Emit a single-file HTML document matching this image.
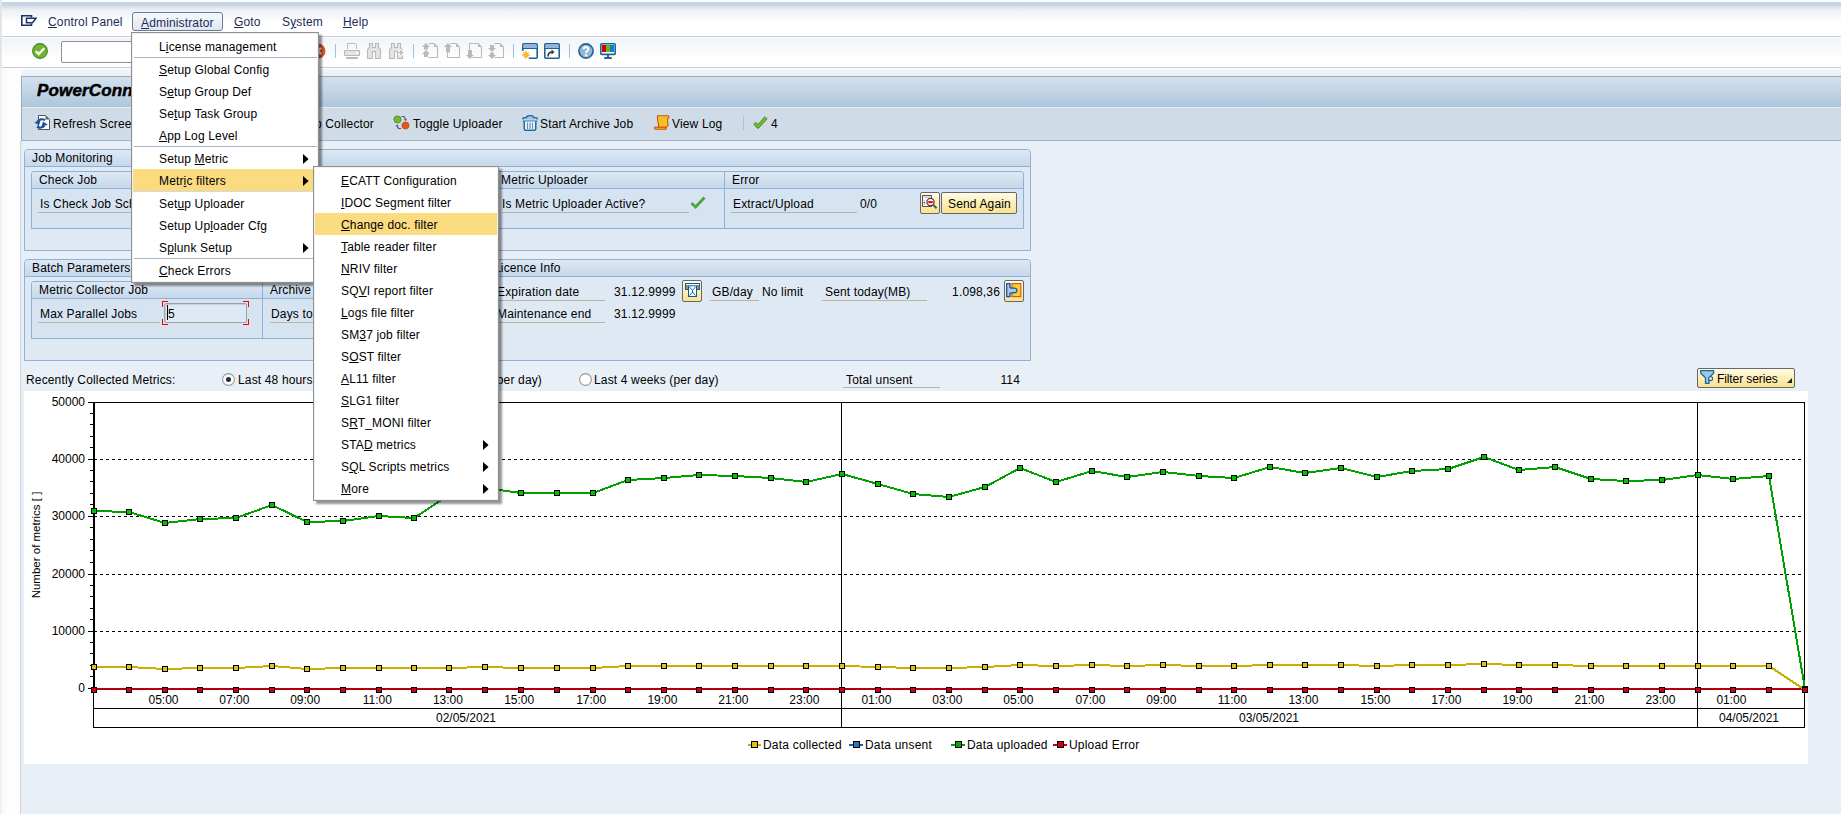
<!DOCTYPE html><html><head><meta charset="utf-8"><title>PowerConnect</title><style>
*{margin:0;padding:0;box-sizing:border-box}
html,body{width:1841px;height:814px;overflow:hidden;background:#fff;font-family:"Liberation Sans",sans-serif;font-size:12px;color:#000}
.a{position:absolute}
.t{position:absolute;white-space:nowrap;line-height:14px;font-size:12px;letter-spacing:0.15px}
.c{letter-spacing:0}
u{text-decoration:none;border-bottom:1px solid currentColor}
svg{display:block}
</style></head><body><div class="a" style="left:0;top:0;width:1841px;height:36px;background:linear-gradient(#fbfcfd 0px,#fbfcfd 1.5px,#c8d3e5 2px,#cbd4e4 5px,#e3e8f0 8px,#eef1f6 11px,#f8f9fb 18px,#fff 22px)"></div>
<div class="a" style="left:0;top:36px;width:1841px;height:1px;background:#c3cbd7"></div>
<div class="a" style="left:0;top:37px;width:1841px;height:30px;background:linear-gradient(#fff 0px,#fff 1px,#f1f4f8 1px,#fbfcfd 18px,#fff 21px)"></div>
<div class="a" style="left:0;top:67px;width:1841px;height:1px;background:#c3cbd7"></div>
<div class="a" style="left:0;top:68px;width:1841px;height:8px;background:linear-gradient(#fff 0px,#fff 1px,#f3f5f9 1px,#e9eef6)"></div>
<div class="a" style="left:0;top:0;width:2px;height:814px;background:linear-gradient(90deg,#dcdde0,#eeeff1);z-index:0"></div>
<div class="a" style="left:0;top:68px;width:21px;height:746px;background:linear-gradient(90deg,#e9eaec,#f8f8f9 2px,#fdfdfd 6px)"></div>
<div class="a" style="left:20px;top:141px;width:1px;height:673px;background:#c8d2df"></div>
<div class="a" style="left:21px;top:76px;width:1820px;height:1px;background:#9aaabd"></div>
<div class="a" style="left:21px;top:76px;width:1px;height:65px;background:#9aaabd"></div>
<div class="a" style="left:22px;top:77px;width:1819px;height:30px;background:linear-gradient(#d3e1ee,#bccfe2 65%,#adc5dd)"></div>
<div class="a" style="left:22px;top:107px;width:1819px;height:1px;background:#e4ebf3"></div>
<div class="a" style="left:22px;top:108px;width:1819px;height:32px;background:#cfdce8"></div>
<div class="a" style="left:21px;top:140px;width:1820px;height:1px;background:#a6b5c6"></div>
<div class="a" style="left:21px;top:141px;width:1820px;height:673px;background:#e9eff6"></div>
<div class="a" style="left:21px;top:15px"><svg width="16" height="12"><path d="M10.5 2.5V0.8H0.8V10.2H10.5V8.5" fill="none" stroke="#1f3264" stroke-width="1.6"/><path d="M5.5 3.3H15L11.5 7.7H5.5Z" fill="none" stroke="#1f3264" stroke-width="1.5"/></svg></div>
<div class="t" style="left:48px;top:15px;color:#1c2b55"><span style="text-decoration:underline">C</span>ontrol Panel</div>
<div class="a" style="left:132px;top:12px;width:91px;height:19px;border:1px solid #6a7b94;border-radius:3px;background:linear-gradient(#f7f9fc,#dfe7f1)"></div>
<div class="t" style="left:141px;top:16px;color:#1c2b55"><span style="text-decoration:underline">A</span>dministrator</div>
<div class="t" style="left:234px;top:15px;color:#1c2b55"><span style="text-decoration:underline">G</span>oto</div>
<div class="t" style="left:282px;top:15px;color:#1c2b55">S<span style="text-decoration:underline">y</span>stem</div>
<div class="t" style="left:343px;top:15px;color:#1c2b55"><span style="text-decoration:underline">H</span>elp</div>
<div class="a" style="left:32px;top:43px"><svg width="16" height="16"><circle cx="8" cy="8" r="7.4" fill="#74b42a" stroke="#3d8a38" stroke-width="1.1"/><path d="M3.8 8.2l2.9 2.9 5.5-5.8" fill="none" stroke="#fff" stroke-width="2.3"/></svg></div>
<div class="a" style="left:61px;top:41px;width:80px;height:22px;border:1px solid #8e8e8e;border-radius:2px;background:#fff"></div>
<div class="a" style="left:335px;top:44px;width:1px;height:14px;background:#9fc0e2"></div>
<div class="a" style="left:413px;top:44px;width:1px;height:14px;background:#9fc0e2"></div>
<div class="a" style="left:513px;top:44px;width:1px;height:14px;background:#9fc0e2"></div>
<div class="a" style="left:569px;top:44px;width:1px;height:14px;background:#9fc0e2"></div>
<div class="a" style="left:310px;top:43px"><svg width="16" height="16"><circle cx="8" cy="8" r="7.5" fill="#d4542a"/><path d="M5 5l6 6M11 5l-6 6" stroke="#fff" stroke-width="2"/></svg></div>
<div class="a" style="left:344px;top:43px"><svg width="17" height="16"><path d="M3.5 6V0.5H11.5L12.5 1.5V6" fill="none" stroke="#b9b9b9" stroke-width="1"/><rect x="0.5" y="7.5" width="15" height="5" rx="1" fill="#e4e4e4" stroke="#b9b9b9" stroke-width="1.2"/><rect x="12" y="9" width="2" height="2" fill="#fff"/><rect x="2" y="14" width="12" height="2" rx="0.7" fill="#b9b9b9"/></svg></div>
<div class="a" style="left:367px;top:43px"><svg width="17" height="16"><path d="M2.5 0.5H5.5V4.5H8.5V0.5H11.5V4.5L13.5 6.5V15.5H8.5V8.5H5.5V15.5H0.5V6.5L2.5 4.5Z" fill="#e4e4e4" stroke="#b9b9b9" stroke-width="1.1"/></svg></div>
<div class="a" style="left:389px;top:43px"><svg width="17" height="16"><path d="M2.5 0.5H5.5V4.5H8.5V0.5H11.5V4.5L13.5 6.5V15.5H8.5V8.5H5.5V15.5H0.5V6.5L2.5 4.5Z" fill="#e4e4e4" stroke="#b9b9b9" stroke-width="1.1"/><path d="M12 6.5v6M9 9.5h6" stroke="#fff" stroke-width="3.6"/><path d="M12 7v5M9.5 9.5h5" stroke="#b9b9b9" stroke-width="1.6"/></svg></div>
<div class="a" style="left:422px;top:43px"><svg width="17" height="16"><path d="M6.5 0.5H12L15.5 4V14.5H6.5" fill="none" stroke="#b9b9b9" stroke-width="1.1"/><path d="M12 0.5L15.5 4H12Z M4 0L8 4H6V6.5H2V4H0Z M4 7L8 11H6V14H2V11H0Z" fill="#b9b9b9"/></svg></div>
<div class="a" style="left:444px;top:43px"><svg width="17" height="16"><path d="M3.5 9.5V14.5H15.5V4L12 0.5H6.5" fill="none" stroke="#b9b9b9" stroke-width="1.1"/><path d="M12 0.5L15.5 4H12Z M4 0L8 4H6V9.5H2V4H0Z" fill="#b9b9b9"/></svg></div>
<div class="a" style="left:466px;top:43px"><svg width="17" height="16"><path d="M3.5 7V0.5H12L15.5 4V14.5H6.5" fill="none" stroke="#b9b9b9" stroke-width="1.1"/><path d="M12 0.5L15.5 4H12Z M4 16L8 12H6V7H2V12H0Z" fill="#b9b9b9"/></svg></div>
<div class="a" style="left:488px;top:43px"><svg width="17" height="16"><path d="M6.5 0.5H12L15.5 4V14.5H6.5" fill="none" stroke="#b9b9b9" stroke-width="1.1"/><path d="M12 0.5L15.5 4H12Z M4 9L8 5H6V2H2V5H0Z M4 16L8 12H6V9.5H2V12H0Z" fill="#b9b9b9"/></svg></div>
<div class="a" style="left:522px;top:43px"><svg width="17" height="16"><rect x="0.8" y="0.8" width="14.4" height="14.4" rx="1" fill="#fff" stroke="#1f6296" stroke-width="1.6"/><rect x="1.6" y="1.6" width="12.8" height="3.4" fill="#94b6d8"/><path d="M1 5.5h14" stroke="#1f6296" stroke-width="1"/><rect x="0" y="8" width="7" height="8" fill="#fff"/><circle cx="4" cy="12" r="2.4" fill="#f7b500"/><path d="M4 8v8M0 12h8M1.2 9.2l5.6 5.6M6.8 9.2l-5.6 5.6" stroke="#f39a1a" stroke-width="1"/><circle cx="4" cy="12" r="2" fill="#fbc21a"/></svg></div>
<div class="a" style="left:544px;top:43px"><svg width="17" height="16"><rect x="0.8" y="0.8" width="14.4" height="14.4" rx="1" fill="#fff" stroke="#1f6296" stroke-width="1.6"/><rect x="1.6" y="1.6" width="12.8" height="3.4" fill="#94b6d8"/><path d="M1 5.5h14" stroke="#1f6296" stroke-width="1"/><path d="M4 13.5C4 10.5 5.5 9 8.5 9" fill="none" stroke="#333" stroke-width="1.6"/><path d="M7.5 6.5L10.5 9L7.5 11.5Z" fill="#333"/></svg></div>
<div class="a" style="left:578px;top:43px"><svg width="16" height="16"><circle cx="8" cy="8" r="7.1" fill="#94b6d8" stroke="#1f6296" stroke-width="1.6"/><path d="M5.7 6.2a2.3 2.2 0 1 1 3.4 1.9c-0.9 0.5-1.1 1-1.1 2" fill="none" stroke="#fff" stroke-width="1.9"/><rect x="6.9" y="11.2" width="2.2" height="2.2" fill="#fff"/></svg></div>
<div class="a" style="left:600px;top:43px"><svg width="16" height="16"><rect x="0.8" y="0.8" width="14.4" height="10.6" rx="1" fill="#fff" stroke="#1f6296" stroke-width="1.6"/><rect x="2" y="2" width="4" height="7" fill="#d00000"/><rect x="6" y="2" width="4" height="7" fill="#70b020"/><rect x="10" y="2" width="4" height="7" fill="#1080d0"/><rect x="7" y="11.5" width="2" height="3" fill="#1f6296"/><rect x="4" y="14" width="8" height="2" rx="1" fill="#1f6296"/></svg></div>
<div class="t" style="left:37px;top:81px;font-size:17px;line-height:20px;font-weight:bold;font-style:italic;-webkit-text-stroke:0.5px #000">PowerConnect for SAP Solutions</div>
<div class="a" style="left:34px;top:115px"><svg width="16" height="16"><path d="M4.5 0.5H11.5L15.5 4.5V14.5H4.5Z" fill="#fff" stroke="#555" stroke-width="1"/><path d="M11.5 0.5L15.5 4.5H11.5Z" fill="#666"/><path d="M11 5.2A4.6 3.6 0 0 0 3.6 6.6" fill="none" stroke="#1f4fa0" stroke-width="2.2"/><path d="M0.3 7.2L6.6 5.2L5 10.6Z" fill="#1f4fa0"/><path d="M3 11.6A4.6 3.6 0 0 0 10.4 10.4" fill="none" stroke="#1f4fa0" stroke-width="2.2"/><path d="M13.8 9.8L7.4 11.8L9 6.4Z" fill="#1f4fa0"/></svg></div>
<div class="t" style="left:53px;top:117px;">Refresh Screen</div>
<div class="t" style="left:74px;width:300px;text-align:right;top:117px;">Start/Stop Collector</div>
<div class="a" style="left:393px;top:115px"><svg width="17" height="16"><circle cx="4.5" cy="4.5" r="3.6" fill="#76b82a" stroke="#3f8a3f" stroke-width="0.8"/><circle cx="12.5" cy="10.5" r="3.6" fill="#e05a1a" stroke="#c04010" stroke-width="0.6"/><path d="M8.5 1.5h2.5l1.5 2.5" fill="none" stroke="#555" stroke-width="1.2"/><path d="M10.8 4.2h3.4l-1.7 1.8z" fill="#555"/><path d="M8 13.5H5.5L4 11.2" fill="none" stroke="#555" stroke-width="1.2"/><path d="M2.3 11.2h3.4l-1.7-1.8z" fill="#555"/></svg></div>
<div class="t" style="left:413px;top:117px;">Toggle Uploader</div>
<div class="a" style="left:522px;top:115px"><svg width="16" height="16"><path d="M0.8 4.5V3.6C0.8 3 1.3 2.6 2 2.6H4.5C4.5 1 5.5 0.6 8 0.6S11.5 1 11.5 2.6H14C14.7 2.6 15.2 3 15.2 3.6V4.5" fill="#a8c6e6" stroke="#1e6aa0" stroke-width="1.3"/><path d="M0.8 6.2h14.4" stroke="#1e6aa0" stroke-width="1.3"/><path d="M2.3 6.5V13.8C2.3 14.6 3 15.2 3.8 15.2H12.2C13 15.2 13.7 14.6 13.7 13.8V6.5" fill="#fff" stroke="#1e6aa0" stroke-width="1.6"/><path d="M5.5 7.5V14M8 7.5V14M10.5 7.5V14" stroke="#5a92c4" stroke-width="1.3"/></svg></div>
<div class="t" style="left:540px;top:117px;">Start Archive Job</div>
<div class="a" style="left:654px;top:115px"><svg width="16" height="15"><path d="M3.5 0.8H14.5C15.3 1.5 15.2 2.6 14 3.2C12.8 4.8 13.5 6.8 14 8.5C14.5 10.5 13.5 11.8 12 12.2H4C5 10.5 4.8 8.8 4 7C3.3 5.2 3.5 3.5 3.5 0.8Z" fill="#f8c020" stroke="#d05010" stroke-width="1.1"/><path d="M0.6 12.2H12C12.5 13 12.3 13.8 11.6 14.3H1.5C0.9 13.8 0.5 13 0.6 12.2Z" fill="#f8b020" stroke="#d05010" stroke-width="1.1"/></svg></div>
<div class="t" style="left:672px;top:117px;">View Log</div>
<div class="a" style="left:743px;top:116px;width:1px;height:14px;background:#a8c4e2"></div>
<div class="a" style="left:753px;top:116px"><svg width="15" height="13"><path d="M1.5 7L5 10.8L13.2 1.5" fill="none" stroke="#4a8a2a" stroke-width="3.6" stroke-linejoin="round"/><path d="M1.5 7L5 10.8L13.2 1.5" fill="none" stroke="#78b830" stroke-width="2.2" stroke-linejoin="round"/></svg></div>
<div class="t" style="left:771px;top:117px;">4</div>
<div class="a" style="left:24px;top:149px;width:1007px;height:102px;border:1px solid #90b0d4;border-radius:4px 4px 0 0;background:#dfe9f4"></div>
<div class="a" style="left:25px;top:150px;width:1005px;height:16px;border-radius:3px 3px 0 0;background:linear-gradient(#dde8f4,#c6d8ec)"></div>
<div class="a" style="left:25px;top:166px;width:1005px;height:1px;background:#90b0d4"></div>
<div class="a" style="left:31px;top:171px;width:993px;height:58px;border:1px solid #90b0d4;border-radius:3px 3px 0 0;background:#d6e4f2"></div>
<div class="a" style="left:32px;top:172px;width:991px;height:16px;border-radius:2px 2px 0 0;background:linear-gradient(#dde8f4,#c6d8ec)"></div>
<div class="a" style="left:32px;top:188px;width:991px;height:1px;background:#90b0d4"></div>
<div class="a" style="left:495px;top:172px;width:1px;height:56px;background:#90b0d4"></div>
<div class="a" style="left:724px;top:172px;width:1px;height:56px;background:#90b0d4"></div>
<div class="t" style="left:32px;top:151px;">Job Monitoring</div>
<div class="t" style="left:39px;top:173px;">Check Job</div>
<div class="t" style="left:40px;top:197px;">Is Check Job Scheduled?</div>
<div class="a" style="left:38px;top:212px;width:262px;height:1px;background:#b9b3a6"></div>
<div class="t" style="left:501px;top:173px;">Metric Uploader</div>
<div class="t" style="left:502px;top:197px;">Is Metric Uploader Active?</div>
<div class="a" style="left:502px;top:212px;width:187px;height:1px;background:#b9b3a6"></div>
<div class="a" style="left:690px;top:196px"><svg width="16" height="13"><path d="M1.5 7l4 4L14.5 1.5" fill="none" stroke="#4aa640" stroke-width="2.8"/></svg></div>
<div class="t" style="left:732px;top:173px;">Error</div>
<div class="t" style="left:733px;top:197px;">Extract/Upload</div>
<div class="a" style="left:731px;top:212px;width:126px;height:1px;background:#b9b3a6"></div>
<div class="t" style="left:860px;top:197px;">0/0</div>
<div class="a" style="left:920px;top:192px;width:20px;height:22px;border:1px solid #66666c;border-radius:2px;background:linear-gradient(#fffbe4,#fdf1c0 40%,#f9e38e)"></div>
<div class="a" style="left:922px;top:195px"><svg width="16" height="16"><rect x="0.5" y="0.5" width="9" height="11" fill="#fff" stroke="#555" stroke-width="1"/><rect x="1.5" y="1.5" width="7" height="1.2" fill="#bbb"/><path d="M1.5 5.3h2M1.5 9.3h2" stroke="#aaa" stroke-width="0.8"/><rect x="1.5" y="7" width="1.6" height="1.2" fill="#e00"/><circle cx="8.5" cy="7" r="3.6" fill="#fff" stroke="#444" stroke-width="1.3"/><rect x="6.3" y="6" width="4.4" height="2.2" fill="#f00"/><path d="M11 9.6l3.6 3.6" stroke="#555" stroke-width="2"/></svg></div>
<div class="a" style="left:941px;top:192px;width:76px;height:22px;border:1px solid #66666c;border-radius:2px;background:linear-gradient(#fffbe4,#fdf1c0 40%,#f9e38e)"></div>
<div class="t" style="left:948px;top:197px;">Send Again</div>
<div class="a" style="left:24px;top:259px;width:467px;height:102px;border:1px solid #90b0d4;border-radius:4px 4px 0 0;background:#dfe9f4"></div>
<div class="a" style="left:25px;top:260px;width:465px;height:16px;border-radius:3px 3px 0 0;background:linear-gradient(#dde8f4,#c6d8ec)"></div>
<div class="a" style="left:25px;top:276px;width:465px;height:1px;background:#90b0d4"></div>
<div class="a" style="left:31px;top:281px;width:454px;height:58px;border:1px solid #90b0d4;border-radius:3px 3px 0 0;background:#d6e4f2"></div>
<div class="a" style="left:32px;top:282px;width:452px;height:16px;border-radius:2px 2px 0 0;background:linear-gradient(#dde8f4,#c6d8ec)"></div>
<div class="a" style="left:32px;top:298px;width:452px;height:1px;background:#90b0d4"></div>
<div class="a" style="left:262px;top:282px;width:1px;height:56px;background:#90b0d4"></div>
<div class="t" style="left:32px;top:261px;">Batch Parameters</div>
<div class="t" style="left:39px;top:283px;">Metric Collector Job</div>
<div class="t" style="left:270px;top:283px;">Archive Job</div>
<div class="t" style="left:40px;top:307px;">Max Parallel Jobs</div>
<div class="a" style="left:38px;top:322px;width:122px;height:1px;background:#b9b3a6"></div>
<div class="t" style="left:271px;top:307px;">Days to keep</div>
<div class="a" style="left:270px;top:322px;width:200px;height:1px;background:#b9b3a6"></div>
<div class="a" style="left:164px;top:303px;width:83px;height:20px;border:1px solid #a0a0a0;border-radius:2px;background:#dfe9f3;box-shadow:inset 1px 1px 1px rgba(0,0,0,0.12)"></div>
<div class="a" style="left:167px;top:305px;width:1px;height:15px;background:#000"></div>
<div class="t" style="left:168px;top:307px;">5</div>
<div class="a" style="left:162px;top:301px;width:6px;height:6px;border-left:1px solid #f00000;border-top:1px solid #f00000"></div>
<div class="a" style="left:243px;top:301px;width:6px;height:6px;border-right:1px solid #f00000;border-top:1px solid #f00000"></div>
<div class="a" style="left:162px;top:319px;width:6px;height:6px;border-left:1px solid #f00000;border-bottom:1px solid #f00000"></div>
<div class="a" style="left:243px;top:319px;width:6px;height:6px;border-right:1px solid #f00000;border-bottom:1px solid #f00000"></div>
<div class="a" style="left:490px;top:259px;width:541px;height:102px;border:1px solid #90b0d4;border-radius:4px 4px 0 0;background:#dfe9f4"></div>
<div class="a" style="left:491px;top:260px;width:539px;height:16px;border-radius:3px 3px 0 0;background:linear-gradient(#dde8f4,#c6d8ec)"></div>
<div class="a" style="left:491px;top:276px;width:539px;height:1px;background:#90b0d4"></div>
<div class="t" style="left:494px;top:261px;">Licence Info</div>
<div class="t" style="left:497px;top:285px;">Expiration date</div>
<div class="a" style="left:499px;top:300px;width:106px;height:1px;background:#b9b3a6"></div>
<div class="t" style="left:614px;top:285px;">31.12.9999</div>
<div class="a" style="left:682px;top:280px;width:20px;height:22px;border:1px solid #66666c;border-radius:2px;background:linear-gradient(#fffbe4,#fdf1c0 40%,#f9e38e)"></div>
<div class="a" style="left:685px;top:283px"><svg width="15" height="15"><rect x="0" y="0" width="15" height="7" fill="#0a5a9a"/><rect x="1" y="1" width="13" height="1.3" fill="#fff"/><rect x="1" y="3" width="2" height="3" fill="#a58c7a"/><rect x="12" y="3" width="2" height="3" fill="#a58c7a"/><rect x="3" y="3" width="9" height="11" fill="#0a5a9a"/><rect x="4" y="3.3" width="7" height="9.7" fill="#fff"/><path d="M4.6 4L7.5 7.5V9L4.6 12.6M10.4 4L7.5 7.5M7.5 9L10.4 12.6" fill="none" stroke="#0a5a9a" stroke-width="0.9"/></svg></div>
<div class="t" style="left:712px;top:285px;">GB/day</div>
<div class="a" style="left:710px;top:300px;width:49px;height:1px;background:#b9b3a6"></div>
<div class="t" style="left:762px;top:285px;">No limit</div>
<div class="t" style="left:825px;top:285px;">Sent today(MB)</div>
<div class="a" style="left:822px;top:300px;width:105px;height:1px;background:#b9b3a6"></div>
<div class="t" style="left:700px;width:300px;text-align:right;top:285px;">1.098,36</div>
<div class="a" style="left:1004px;top:280px;width:20px;height:22px;border:1px solid #66666c;border-radius:2px;background:linear-gradient(#fffbe4,#fdf1c0 40%,#f9e38e)"></div>
<div class="a" style="left:1006px;top:283px"><svg width="16" height="15"><rect x="6" y="0.6" width="8.8" height="13" fill="#fbd030" stroke="#e0580e" stroke-width="1.2"/><path d="M0.7 0.7H4V4.6C5 5 6.2 5.2 8 5.2A2.3 2.3 0 1 1 8 9.6C6.2 9.6 5 9.8 4 10.2V13.6H0.7Z" fill="#a9c9ea" stroke="#0a5aa0" stroke-width="1.3"/></svg></div>
<div class="t" style="left:497px;top:307px;">Maintenance end</div>
<div class="a" style="left:499px;top:322px;width:106px;height:1px;background:#b9b3a6"></div>
<div class="t" style="left:614px;top:307px;">31.12.9999</div>
<div class="t" style="left:26px;top:373px;">Recently Collected Metrics:</div>
<div class="a" style="left:222px;top:373px"><svg width="13" height="13"><circle cx="6.5" cy="6.5" r="5.9" fill="#fff" stroke="#999" stroke-width="1.1"/><circle cx="6.5" cy="6.5" r="2.5" fill="#2a2a40"/></svg></div>
<div class="t" style="left:238px;top:373px;">Last 48 hours (per hour)</div>
<div class="a" style="left:426px;top:373px"><svg width="13" height="13"><circle cx="6.5" cy="6.5" r="5.9" fill="#fff" stroke="#999" stroke-width="1.1"/></svg></div>
<div class="t" style="left:242px;width:300px;text-align:right;top:373px;">Last 7 days (per day)</div>
<div class="a" style="left:579px;top:373px"><svg width="13" height="13"><circle cx="6.5" cy="6.5" r="5.9" fill="#fff" stroke="#999" stroke-width="1.1"/></svg></div>
<div class="t" style="left:594px;top:373px;">Last 4 weeks (per day)</div>
<div class="t" style="left:846px;top:373px;">Total unsent</div>
<div class="a" style="left:843px;top:387px;width:97px;height:1px;background:#b9b3a6"></div>
<div class="t" style="left:720px;width:300px;text-align:right;top:373px;">114</div>
<div class="a" style="left:1697px;top:368px;width:98px;height:20px;border:1px solid #66666c;border-radius:2px;background:linear-gradient(#fffbe4,#fdf1c0 40%,#f9e38e)"></div>
<div class="a" style="left:1700px;top:370px"><svg width="15" height="15"><path d="M0.7 0.7H13.6V3.2L9 7.8V13.4H5.5V7.8L0.7 3.2Z" fill="#a3c3e3" stroke="#1a6aa0" stroke-width="1.3"/><circle cx="10.6" cy="8.6" r="2" fill="#fff" stroke="#1a6aa0" stroke-width="1.2"/></svg></div>
<div class="t" style="left:1717px;top:372px;letter-spacing:-0.1px">Filter series</div>
<div class="a" style="left:1787px;top:378px"><svg width="5" height="5"><path d="M5 0v5H0z" fill="#222"/></svg></div>
<div class="a" style="left:24px;top:391px;width:1784px;height:373px;background:#fff"></div>
<svg class="a" style="left:0;top:0" width="1841" height="814" shape-rendering="crispEdges"><line x1="94" y1="459.5" x2="1804" y2="459.5" stroke="#000" stroke-width="1" stroke-dasharray="3 3"/><line x1="94" y1="516.5" x2="1804" y2="516.5" stroke="#000" stroke-width="1" stroke-dasharray="3 3"/><line x1="94" y1="574.5" x2="1804" y2="574.5" stroke="#000" stroke-width="1" stroke-dasharray="3 3"/><line x1="94" y1="631.5" x2="1804" y2="631.5" stroke="#000" stroke-width="1" stroke-dasharray="3 3"/><line x1="94" y1="402.5" x2="1805" y2="402.5" stroke="#000" stroke-width="1"/><line x1="1804.5" y1="402" x2="1804.5" y2="728" stroke="#000" stroke-width="1"/><line x1="841.5" y1="402" x2="841.5" y2="728" stroke="#000" stroke-width="1"/><line x1="1697.5" y1="402" x2="1697.5" y2="728" stroke="#000" stroke-width="1"/><line x1="93" y1="708.5" x2="1805" y2="708.5" stroke="#000" stroke-width="1"/><line x1="93" y1="727.5" x2="1805" y2="727.5" stroke="#000" stroke-width="1"/><line x1="93.5" y1="689" x2="93.5" y2="728" stroke="#000" stroke-width="1"/><rect x="93" y="402" width="2" height="288" fill="#000"/><rect x="88" y="402" width="6" height="1" fill="#000"/><rect x="90" y="413" width="4" height="1" fill="#000"/><rect x="90" y="424" width="4" height="1" fill="#000"/><rect x="90" y="436" width="4" height="1" fill="#000"/><rect x="90" y="447" width="4" height="1" fill="#000"/><rect x="88" y="459" width="6" height="1" fill="#000"/><rect x="90" y="470" width="4" height="1" fill="#000"/><rect x="90" y="481" width="4" height="1" fill="#000"/><rect x="90" y="493" width="4" height="1" fill="#000"/><rect x="90" y="504" width="4" height="1" fill="#000"/><rect x="88" y="516" width="6" height="1" fill="#000"/><rect x="90" y="527" width="4" height="1" fill="#000"/><rect x="90" y="539" width="4" height="1" fill="#000"/><rect x="90" y="550" width="4" height="1" fill="#000"/><rect x="90" y="562" width="4" height="1" fill="#000"/><rect x="88" y="574" width="6" height="1" fill="#000"/><rect x="90" y="585" width="4" height="1" fill="#000"/><rect x="90" y="596" width="4" height="1" fill="#000"/><rect x="90" y="608" width="4" height="1" fill="#000"/><rect x="90" y="619" width="4" height="1" fill="#000"/><rect x="88" y="631" width="6" height="1" fill="#000"/><rect x="90" y="642" width="4" height="1" fill="#000"/><rect x="90" y="653" width="4" height="1" fill="#000"/><rect x="90" y="665" width="4" height="1" fill="#000"/><rect x="90" y="676" width="4" height="1" fill="#000"/><rect x="88" y="688" width="6" height="1" fill="#000"/></svg>
<div class="t c" style="left:0;width:85px;text-align:right;top:681px">0</div>
<div class="t c" style="left:0;width:85px;text-align:right;top:624px">10000</div>
<div class="t c" style="left:0;width:85px;text-align:right;top:567px">20000</div>
<div class="t c" style="left:0;width:85px;text-align:right;top:509px">30000</div>
<div class="t c" style="left:0;width:85px;text-align:right;top:452px">40000</div>
<div class="t c" style="left:0;width:85px;text-align:right;top:395px">50000</div>
<div class="a" style="left:36px;top:545px;width:0;height:0"><div class="t c" style="left:-60px;top:-7px;width:120px;text-align:center;font-size:11.5px;transform:rotate(-90deg)">Number of metrics [ ]</div></div>
<div class="t c" style="left:133.5px;width:60px;text-align:center;top:692.5px">05:00</div>
<div class="t c" style="left:204.3px;width:60px;text-align:center;top:692.5px">07:00</div>
<div class="t c" style="left:275.2px;width:60px;text-align:center;top:692.5px">09:00</div>
<div class="t c" style="left:347.4px;width:60px;text-align:center;top:692.5px">11:00</div>
<div class="t c" style="left:417.9px;width:60px;text-align:center;top:692.5px">13:00</div>
<div class="t c" style="left:489.2px;width:60px;text-align:center;top:692.5px">15:00</div>
<div class="t c" style="left:561.2px;width:60px;text-align:center;top:692.5px">17:00</div>
<div class="t c" style="left:632.4px;width:60px;text-align:center;top:692.5px">19:00</div>
<div class="t c" style="left:703.3px;width:60px;text-align:center;top:692.5px">21:00</div>
<div class="t c" style="left:774.3px;width:60px;text-align:center;top:692.5px">23:00</div>
<div class="t c" style="left:846.4px;width:60px;text-align:center;top:692.5px">01:00</div>
<div class="t c" style="left:917.3px;width:60px;text-align:center;top:692.5px">03:00</div>
<div class="t c" style="left:988.3px;width:60px;text-align:center;top:692.5px">05:00</div>
<div class="t c" style="left:1060.4px;width:60px;text-align:center;top:692.5px">07:00</div>
<div class="t c" style="left:1131.3px;width:60px;text-align:center;top:692.5px">09:00</div>
<div class="t c" style="left:1202.3px;width:60px;text-align:center;top:692.5px">11:00</div>
<div class="t c" style="left:1273.4px;width:60px;text-align:center;top:692.5px">13:00</div>
<div class="t c" style="left:1345.5px;width:60px;text-align:center;top:692.5px">15:00</div>
<div class="t c" style="left:1416.3px;width:60px;text-align:center;top:692.5px">17:00</div>
<div class="t c" style="left:1487.4px;width:60px;text-align:center;top:692.5px">19:00</div>
<div class="t c" style="left:1559.4px;width:60px;text-align:center;top:692.5px">21:00</div>
<div class="t c" style="left:1630.4px;width:60px;text-align:center;top:692.5px">23:00</div>
<div class="t c" style="left:1701.4px;width:60px;text-align:center;top:692.5px">01:00</div>
<div class="t c" style="left:366px;width:200px;text-align:center;top:710.5px">02/05/2021</div>
<div class="t c" style="left:1169px;width:200px;text-align:center;top:710.5px">03/05/2021</div>
<div class="t c" style="left:1649px;width:200px;text-align:center;top:710.5px">04/05/2021</div>
<svg class="a" style="left:0;top:0" width="1841" height="814"><polyline points="94,689 129,689 165,689 200,689 236,689 272,689 307,689 343,689 379,689 414,689 449,689 485,689 521,689 557,689 593,689 628,689 664,689 699,689 735,689 771,689 806,689 842,689 878,689 913,689 949,689 985,689 1020,689 1056,689 1092,689 1127,689 1163,689 1199,689 1234,689 1270,689 1305,689 1341,689 1377,689 1412,689 1448,689 1484,689 1519,689 1555,689 1591,689 1626,689 1662,689 1698,689 1733,689 1769,689 1805,689" fill="none" stroke="#b4000e" stroke-width="2" shape-rendering="crispEdges"/><polyline points="94,667 129,667 165,669 200,668 236,668 272,666 307,669 343,668 379,668 414,668 449,668 485,667 521,668 557,668 593,668 628,666 664,666 699,666 735,666 771,666 806,666 842,666 878,667 913,668 949,668 985,667 1020,665 1056,666 1092,665 1127,666 1163,665 1199,666 1234,666 1270,665 1305,665 1341,665 1377,666 1412,665 1448,665 1484,664 1519,665 1555,665 1591,666 1626,666 1662,666 1698,666 1733,666 1769,666 1805,690" fill="none" stroke="#c8b000" stroke-width="2" shape-rendering="crispEdges"/><polyline points="94,511 129,512 165,523 200,519 236,518 272,505 307,522 343,521 379,516 414,518 449,495 485,488 521,493 557,493 593,493 628,480 664,478 699,475 735,476 771,478 806,482 842,474 878,484 913,494 949,497 985,487 1020,468 1056,482 1092,471 1127,477 1163,472 1199,476 1234,478 1270,467 1305,473 1341,468 1377,477 1412,471 1448,469 1484,457 1519,470 1555,467 1591,479 1626,481 1662,480 1698,475 1733,479 1769,476 1805,689" fill="none" stroke="#00a000" stroke-width="2" shape-rendering="crispEdges"/><rect x="91.5" y="664.5" width="5" height="5" fill="#e0c020" stroke="#000" stroke-width="1" shape-rendering="crispEdges"/><rect x="126.5" y="664.5" width="5" height="5" fill="#e0c020" stroke="#000" stroke-width="1" shape-rendering="crispEdges"/><rect x="162.5" y="666.5" width="5" height="5" fill="#e0c020" stroke="#000" stroke-width="1" shape-rendering="crispEdges"/><rect x="197.5" y="665.5" width="5" height="5" fill="#e0c020" stroke="#000" stroke-width="1" shape-rendering="crispEdges"/><rect x="233.5" y="665.5" width="5" height="5" fill="#e0c020" stroke="#000" stroke-width="1" shape-rendering="crispEdges"/><rect x="269.5" y="663.5" width="5" height="5" fill="#e0c020" stroke="#000" stroke-width="1" shape-rendering="crispEdges"/><rect x="304.5" y="666.5" width="5" height="5" fill="#e0c020" stroke="#000" stroke-width="1" shape-rendering="crispEdges"/><rect x="340.5" y="665.5" width="5" height="5" fill="#e0c020" stroke="#000" stroke-width="1" shape-rendering="crispEdges"/><rect x="376.5" y="665.5" width="5" height="5" fill="#e0c020" stroke="#000" stroke-width="1" shape-rendering="crispEdges"/><rect x="411.5" y="665.5" width="5" height="5" fill="#e0c020" stroke="#000" stroke-width="1" shape-rendering="crispEdges"/><rect x="446.5" y="665.5" width="5" height="5" fill="#e0c020" stroke="#000" stroke-width="1" shape-rendering="crispEdges"/><rect x="482.5" y="664.5" width="5" height="5" fill="#e0c020" stroke="#000" stroke-width="1" shape-rendering="crispEdges"/><rect x="518.5" y="665.5" width="5" height="5" fill="#e0c020" stroke="#000" stroke-width="1" shape-rendering="crispEdges"/><rect x="554.5" y="665.5" width="5" height="5" fill="#e0c020" stroke="#000" stroke-width="1" shape-rendering="crispEdges"/><rect x="590.5" y="665.5" width="5" height="5" fill="#e0c020" stroke="#000" stroke-width="1" shape-rendering="crispEdges"/><rect x="625.5" y="663.5" width="5" height="5" fill="#e0c020" stroke="#000" stroke-width="1" shape-rendering="crispEdges"/><rect x="661.5" y="663.5" width="5" height="5" fill="#e0c020" stroke="#000" stroke-width="1" shape-rendering="crispEdges"/><rect x="696.5" y="663.5" width="5" height="5" fill="#e0c020" stroke="#000" stroke-width="1" shape-rendering="crispEdges"/><rect x="732.5" y="663.5" width="5" height="5" fill="#e0c020" stroke="#000" stroke-width="1" shape-rendering="crispEdges"/><rect x="768.5" y="663.5" width="5" height="5" fill="#e0c020" stroke="#000" stroke-width="1" shape-rendering="crispEdges"/><rect x="803.5" y="663.5" width="5" height="5" fill="#e0c020" stroke="#000" stroke-width="1" shape-rendering="crispEdges"/><rect x="839.5" y="663.5" width="5" height="5" fill="#e0c020" stroke="#000" stroke-width="1" shape-rendering="crispEdges"/><rect x="875.5" y="664.5" width="5" height="5" fill="#e0c020" stroke="#000" stroke-width="1" shape-rendering="crispEdges"/><rect x="910.5" y="665.5" width="5" height="5" fill="#e0c020" stroke="#000" stroke-width="1" shape-rendering="crispEdges"/><rect x="946.5" y="665.5" width="5" height="5" fill="#e0c020" stroke="#000" stroke-width="1" shape-rendering="crispEdges"/><rect x="982.5" y="664.5" width="5" height="5" fill="#e0c020" stroke="#000" stroke-width="1" shape-rendering="crispEdges"/><rect x="1017.5" y="662.5" width="5" height="5" fill="#e0c020" stroke="#000" stroke-width="1" shape-rendering="crispEdges"/><rect x="1053.5" y="663.5" width="5" height="5" fill="#e0c020" stroke="#000" stroke-width="1" shape-rendering="crispEdges"/><rect x="1089.5" y="662.5" width="5" height="5" fill="#e0c020" stroke="#000" stroke-width="1" shape-rendering="crispEdges"/><rect x="1124.5" y="663.5" width="5" height="5" fill="#e0c020" stroke="#000" stroke-width="1" shape-rendering="crispEdges"/><rect x="1160.5" y="662.5" width="5" height="5" fill="#e0c020" stroke="#000" stroke-width="1" shape-rendering="crispEdges"/><rect x="1196.5" y="663.5" width="5" height="5" fill="#e0c020" stroke="#000" stroke-width="1" shape-rendering="crispEdges"/><rect x="1231.5" y="663.5" width="5" height="5" fill="#e0c020" stroke="#000" stroke-width="1" shape-rendering="crispEdges"/><rect x="1267.5" y="662.5" width="5" height="5" fill="#e0c020" stroke="#000" stroke-width="1" shape-rendering="crispEdges"/><rect x="1302.5" y="662.5" width="5" height="5" fill="#e0c020" stroke="#000" stroke-width="1" shape-rendering="crispEdges"/><rect x="1338.5" y="662.5" width="5" height="5" fill="#e0c020" stroke="#000" stroke-width="1" shape-rendering="crispEdges"/><rect x="1374.5" y="663.5" width="5" height="5" fill="#e0c020" stroke="#000" stroke-width="1" shape-rendering="crispEdges"/><rect x="1409.5" y="662.5" width="5" height="5" fill="#e0c020" stroke="#000" stroke-width="1" shape-rendering="crispEdges"/><rect x="1445.5" y="662.5" width="5" height="5" fill="#e0c020" stroke="#000" stroke-width="1" shape-rendering="crispEdges"/><rect x="1481.5" y="661.5" width="5" height="5" fill="#e0c020" stroke="#000" stroke-width="1" shape-rendering="crispEdges"/><rect x="1516.5" y="662.5" width="5" height="5" fill="#e0c020" stroke="#000" stroke-width="1" shape-rendering="crispEdges"/><rect x="1552.5" y="662.5" width="5" height="5" fill="#e0c020" stroke="#000" stroke-width="1" shape-rendering="crispEdges"/><rect x="1588.5" y="663.5" width="5" height="5" fill="#e0c020" stroke="#000" stroke-width="1" shape-rendering="crispEdges"/><rect x="1623.5" y="663.5" width="5" height="5" fill="#e0c020" stroke="#000" stroke-width="1" shape-rendering="crispEdges"/><rect x="1659.5" y="663.5" width="5" height="5" fill="#e0c020" stroke="#000" stroke-width="1" shape-rendering="crispEdges"/><rect x="1695.5" y="663.5" width="5" height="5" fill="#e0c020" stroke="#000" stroke-width="1" shape-rendering="crispEdges"/><rect x="1730.5" y="663.5" width="5" height="5" fill="#e0c020" stroke="#000" stroke-width="1" shape-rendering="crispEdges"/><rect x="1766.5" y="663.5" width="5" height="5" fill="#e0c020" stroke="#000" stroke-width="1" shape-rendering="crispEdges"/><rect x="1802.5" y="687.5" width="5" height="5" fill="#e0c020" stroke="#000" stroke-width="1" shape-rendering="crispEdges"/><rect x="91.5" y="508.5" width="5" height="5" fill="#00c000" stroke="#000" stroke-width="1" shape-rendering="crispEdges"/><rect x="126.5" y="509.5" width="5" height="5" fill="#00c000" stroke="#000" stroke-width="1" shape-rendering="crispEdges"/><rect x="162.5" y="520.5" width="5" height="5" fill="#00c000" stroke="#000" stroke-width="1" shape-rendering="crispEdges"/><rect x="197.5" y="516.5" width="5" height="5" fill="#00c000" stroke="#000" stroke-width="1" shape-rendering="crispEdges"/><rect x="233.5" y="515.5" width="5" height="5" fill="#00c000" stroke="#000" stroke-width="1" shape-rendering="crispEdges"/><rect x="269.5" y="502.5" width="5" height="5" fill="#00c000" stroke="#000" stroke-width="1" shape-rendering="crispEdges"/><rect x="304.5" y="519.5" width="5" height="5" fill="#00c000" stroke="#000" stroke-width="1" shape-rendering="crispEdges"/><rect x="340.5" y="518.5" width="5" height="5" fill="#00c000" stroke="#000" stroke-width="1" shape-rendering="crispEdges"/><rect x="376.5" y="513.5" width="5" height="5" fill="#00c000" stroke="#000" stroke-width="1" shape-rendering="crispEdges"/><rect x="411.5" y="515.5" width="5" height="5" fill="#00c000" stroke="#000" stroke-width="1" shape-rendering="crispEdges"/><rect x="446.5" y="492.5" width="5" height="5" fill="#00c000" stroke="#000" stroke-width="1" shape-rendering="crispEdges"/><rect x="482.5" y="485.5" width="5" height="5" fill="#00c000" stroke="#000" stroke-width="1" shape-rendering="crispEdges"/><rect x="518.5" y="490.5" width="5" height="5" fill="#00c000" stroke="#000" stroke-width="1" shape-rendering="crispEdges"/><rect x="554.5" y="490.5" width="5" height="5" fill="#00c000" stroke="#000" stroke-width="1" shape-rendering="crispEdges"/><rect x="590.5" y="490.5" width="5" height="5" fill="#00c000" stroke="#000" stroke-width="1" shape-rendering="crispEdges"/><rect x="625.5" y="477.5" width="5" height="5" fill="#00c000" stroke="#000" stroke-width="1" shape-rendering="crispEdges"/><rect x="661.5" y="475.5" width="5" height="5" fill="#00c000" stroke="#000" stroke-width="1" shape-rendering="crispEdges"/><rect x="696.5" y="472.5" width="5" height="5" fill="#00c000" stroke="#000" stroke-width="1" shape-rendering="crispEdges"/><rect x="732.5" y="473.5" width="5" height="5" fill="#00c000" stroke="#000" stroke-width="1" shape-rendering="crispEdges"/><rect x="768.5" y="475.5" width="5" height="5" fill="#00c000" stroke="#000" stroke-width="1" shape-rendering="crispEdges"/><rect x="803.5" y="479.5" width="5" height="5" fill="#00c000" stroke="#000" stroke-width="1" shape-rendering="crispEdges"/><rect x="839.5" y="471.5" width="5" height="5" fill="#00c000" stroke="#000" stroke-width="1" shape-rendering="crispEdges"/><rect x="875.5" y="481.5" width="5" height="5" fill="#00c000" stroke="#000" stroke-width="1" shape-rendering="crispEdges"/><rect x="910.5" y="491.5" width="5" height="5" fill="#00c000" stroke="#000" stroke-width="1" shape-rendering="crispEdges"/><rect x="946.5" y="494.5" width="5" height="5" fill="#00c000" stroke="#000" stroke-width="1" shape-rendering="crispEdges"/><rect x="982.5" y="484.5" width="5" height="5" fill="#00c000" stroke="#000" stroke-width="1" shape-rendering="crispEdges"/><rect x="1017.5" y="465.5" width="5" height="5" fill="#00c000" stroke="#000" stroke-width="1" shape-rendering="crispEdges"/><rect x="1053.5" y="479.5" width="5" height="5" fill="#00c000" stroke="#000" stroke-width="1" shape-rendering="crispEdges"/><rect x="1089.5" y="468.5" width="5" height="5" fill="#00c000" stroke="#000" stroke-width="1" shape-rendering="crispEdges"/><rect x="1124.5" y="474.5" width="5" height="5" fill="#00c000" stroke="#000" stroke-width="1" shape-rendering="crispEdges"/><rect x="1160.5" y="469.5" width="5" height="5" fill="#00c000" stroke="#000" stroke-width="1" shape-rendering="crispEdges"/><rect x="1196.5" y="473.5" width="5" height="5" fill="#00c000" stroke="#000" stroke-width="1" shape-rendering="crispEdges"/><rect x="1231.5" y="475.5" width="5" height="5" fill="#00c000" stroke="#000" stroke-width="1" shape-rendering="crispEdges"/><rect x="1267.5" y="464.5" width="5" height="5" fill="#00c000" stroke="#000" stroke-width="1" shape-rendering="crispEdges"/><rect x="1302.5" y="470.5" width="5" height="5" fill="#00c000" stroke="#000" stroke-width="1" shape-rendering="crispEdges"/><rect x="1338.5" y="465.5" width="5" height="5" fill="#00c000" stroke="#000" stroke-width="1" shape-rendering="crispEdges"/><rect x="1374.5" y="474.5" width="5" height="5" fill="#00c000" stroke="#000" stroke-width="1" shape-rendering="crispEdges"/><rect x="1409.5" y="468.5" width="5" height="5" fill="#00c000" stroke="#000" stroke-width="1" shape-rendering="crispEdges"/><rect x="1445.5" y="466.5" width="5" height="5" fill="#00c000" stroke="#000" stroke-width="1" shape-rendering="crispEdges"/><rect x="1481.5" y="454.5" width="5" height="5" fill="#00c000" stroke="#000" stroke-width="1" shape-rendering="crispEdges"/><rect x="1516.5" y="467.5" width="5" height="5" fill="#00c000" stroke="#000" stroke-width="1" shape-rendering="crispEdges"/><rect x="1552.5" y="464.5" width="5" height="5" fill="#00c000" stroke="#000" stroke-width="1" shape-rendering="crispEdges"/><rect x="1588.5" y="476.5" width="5" height="5" fill="#00c000" stroke="#000" stroke-width="1" shape-rendering="crispEdges"/><rect x="1623.5" y="478.5" width="5" height="5" fill="#00c000" stroke="#000" stroke-width="1" shape-rendering="crispEdges"/><rect x="1659.5" y="477.5" width="5" height="5" fill="#00c000" stroke="#000" stroke-width="1" shape-rendering="crispEdges"/><rect x="1695.5" y="472.5" width="5" height="5" fill="#00c000" stroke="#000" stroke-width="1" shape-rendering="crispEdges"/><rect x="1730.5" y="476.5" width="5" height="5" fill="#00c000" stroke="#000" stroke-width="1" shape-rendering="crispEdges"/><rect x="1766.5" y="473.5" width="5" height="5" fill="#00c000" stroke="#000" stroke-width="1" shape-rendering="crispEdges"/><rect x="1802.5" y="686.5" width="5" height="5" fill="#00c000" stroke="#000" stroke-width="1" shape-rendering="crispEdges"/><rect x="91.5" y="687.5" width="5" height="5" fill="#c8001c" stroke="#000" stroke-width="1" shape-rendering="crispEdges"/><rect x="126.5" y="687.5" width="5" height="5" fill="#c8001c" stroke="#000" stroke-width="1" shape-rendering="crispEdges"/><rect x="162.5" y="687.5" width="5" height="5" fill="#c8001c" stroke="#000" stroke-width="1" shape-rendering="crispEdges"/><rect x="197.5" y="687.5" width="5" height="5" fill="#c8001c" stroke="#000" stroke-width="1" shape-rendering="crispEdges"/><rect x="233.5" y="687.5" width="5" height="5" fill="#c8001c" stroke="#000" stroke-width="1" shape-rendering="crispEdges"/><rect x="269.5" y="687.5" width="5" height="5" fill="#c8001c" stroke="#000" stroke-width="1" shape-rendering="crispEdges"/><rect x="304.5" y="687.5" width="5" height="5" fill="#c8001c" stroke="#000" stroke-width="1" shape-rendering="crispEdges"/><rect x="340.5" y="687.5" width="5" height="5" fill="#c8001c" stroke="#000" stroke-width="1" shape-rendering="crispEdges"/><rect x="376.5" y="687.5" width="5" height="5" fill="#c8001c" stroke="#000" stroke-width="1" shape-rendering="crispEdges"/><rect x="411.5" y="687.5" width="5" height="5" fill="#c8001c" stroke="#000" stroke-width="1" shape-rendering="crispEdges"/><rect x="446.5" y="687.5" width="5" height="5" fill="#c8001c" stroke="#000" stroke-width="1" shape-rendering="crispEdges"/><rect x="482.5" y="687.5" width="5" height="5" fill="#c8001c" stroke="#000" stroke-width="1" shape-rendering="crispEdges"/><rect x="518.5" y="687.5" width="5" height="5" fill="#c8001c" stroke="#000" stroke-width="1" shape-rendering="crispEdges"/><rect x="554.5" y="687.5" width="5" height="5" fill="#c8001c" stroke="#000" stroke-width="1" shape-rendering="crispEdges"/><rect x="590.5" y="687.5" width="5" height="5" fill="#c8001c" stroke="#000" stroke-width="1" shape-rendering="crispEdges"/><rect x="625.5" y="687.5" width="5" height="5" fill="#c8001c" stroke="#000" stroke-width="1" shape-rendering="crispEdges"/><rect x="661.5" y="687.5" width="5" height="5" fill="#c8001c" stroke="#000" stroke-width="1" shape-rendering="crispEdges"/><rect x="696.5" y="687.5" width="5" height="5" fill="#c8001c" stroke="#000" stroke-width="1" shape-rendering="crispEdges"/><rect x="732.5" y="687.5" width="5" height="5" fill="#c8001c" stroke="#000" stroke-width="1" shape-rendering="crispEdges"/><rect x="768.5" y="687.5" width="5" height="5" fill="#c8001c" stroke="#000" stroke-width="1" shape-rendering="crispEdges"/><rect x="803.5" y="687.5" width="5" height="5" fill="#c8001c" stroke="#000" stroke-width="1" shape-rendering="crispEdges"/><rect x="839.5" y="687.5" width="5" height="5" fill="#c8001c" stroke="#000" stroke-width="1" shape-rendering="crispEdges"/><rect x="875.5" y="687.5" width="5" height="5" fill="#c8001c" stroke="#000" stroke-width="1" shape-rendering="crispEdges"/><rect x="910.5" y="687.5" width="5" height="5" fill="#c8001c" stroke="#000" stroke-width="1" shape-rendering="crispEdges"/><rect x="946.5" y="687.5" width="5" height="5" fill="#c8001c" stroke="#000" stroke-width="1" shape-rendering="crispEdges"/><rect x="982.5" y="687.5" width="5" height="5" fill="#c8001c" stroke="#000" stroke-width="1" shape-rendering="crispEdges"/><rect x="1017.5" y="687.5" width="5" height="5" fill="#c8001c" stroke="#000" stroke-width="1" shape-rendering="crispEdges"/><rect x="1053.5" y="687.5" width="5" height="5" fill="#c8001c" stroke="#000" stroke-width="1" shape-rendering="crispEdges"/><rect x="1089.5" y="687.5" width="5" height="5" fill="#c8001c" stroke="#000" stroke-width="1" shape-rendering="crispEdges"/><rect x="1124.5" y="687.5" width="5" height="5" fill="#c8001c" stroke="#000" stroke-width="1" shape-rendering="crispEdges"/><rect x="1160.5" y="687.5" width="5" height="5" fill="#c8001c" stroke="#000" stroke-width="1" shape-rendering="crispEdges"/><rect x="1196.5" y="687.5" width="5" height="5" fill="#c8001c" stroke="#000" stroke-width="1" shape-rendering="crispEdges"/><rect x="1231.5" y="687.5" width="5" height="5" fill="#c8001c" stroke="#000" stroke-width="1" shape-rendering="crispEdges"/><rect x="1267.5" y="687.5" width="5" height="5" fill="#c8001c" stroke="#000" stroke-width="1" shape-rendering="crispEdges"/><rect x="1302.5" y="687.5" width="5" height="5" fill="#c8001c" stroke="#000" stroke-width="1" shape-rendering="crispEdges"/><rect x="1338.5" y="687.5" width="5" height="5" fill="#c8001c" stroke="#000" stroke-width="1" shape-rendering="crispEdges"/><rect x="1374.5" y="687.5" width="5" height="5" fill="#c8001c" stroke="#000" stroke-width="1" shape-rendering="crispEdges"/><rect x="1409.5" y="687.5" width="5" height="5" fill="#c8001c" stroke="#000" stroke-width="1" shape-rendering="crispEdges"/><rect x="1445.5" y="687.5" width="5" height="5" fill="#c8001c" stroke="#000" stroke-width="1" shape-rendering="crispEdges"/><rect x="1481.5" y="687.5" width="5" height="5" fill="#c8001c" stroke="#000" stroke-width="1" shape-rendering="crispEdges"/><rect x="1516.5" y="687.5" width="5" height="5" fill="#c8001c" stroke="#000" stroke-width="1" shape-rendering="crispEdges"/><rect x="1552.5" y="687.5" width="5" height="5" fill="#c8001c" stroke="#000" stroke-width="1" shape-rendering="crispEdges"/><rect x="1588.5" y="687.5" width="5" height="5" fill="#c8001c" stroke="#000" stroke-width="1" shape-rendering="crispEdges"/><rect x="1623.5" y="687.5" width="5" height="5" fill="#c8001c" stroke="#000" stroke-width="1" shape-rendering="crispEdges"/><rect x="1659.5" y="687.5" width="5" height="5" fill="#c8001c" stroke="#000" stroke-width="1" shape-rendering="crispEdges"/><rect x="1695.5" y="687.5" width="5" height="5" fill="#c8001c" stroke="#000" stroke-width="1" shape-rendering="crispEdges"/><rect x="1730.5" y="687.5" width="5" height="5" fill="#c8001c" stroke="#000" stroke-width="1" shape-rendering="crispEdges"/><rect x="1766.5" y="687.5" width="5" height="5" fill="#c8001c" stroke="#000" stroke-width="1" shape-rendering="crispEdges"/><rect x="1802.5" y="687.5" width="5" height="5" fill="#c8001c" stroke="#000" stroke-width="1" shape-rendering="crispEdges"/></svg>
<div class="a" style="left:748px;top:744px;width:13px;height:2px;background:#c8b000"></div>
<div class="a" style="left:751px;top:741px;width:7px;height:7px;border:1px solid #000;background:#e0c020"></div>
<div class="t c" style="left:763px;top:737.5px;letter-spacing:0.2px">Data collected</div>
<div class="a" style="left:849px;top:744px;width:14px;height:2px;background:#1f5f9f"></div>
<div class="a" style="left:853px;top:741px;width:7px;height:7px;border:1px solid #000;background:#2a78b8"></div>
<div class="t c" style="left:865px;top:737.5px;letter-spacing:0.2px">Data unsent</div>
<div class="a" style="left:951px;top:744px;width:14px;height:2px;background:#00a000"></div>
<div class="a" style="left:955px;top:741px;width:7px;height:7px;border:1px solid #000;background:#10a010"></div>
<div class="t c" style="left:967px;top:737.5px;letter-spacing:0.2px">Data uploaded</div>
<div class="a" style="left:1053px;top:744px;width:14px;height:2px;background:#c00018"></div>
<div class="a" style="left:1057px;top:741px;width:7px;height:7px;border:1px solid #000;background:#c8001c"></div>
<div class="t c" style="left:1069px;top:737.5px;letter-spacing:0.2px">Upload Error</div>
<div class="a" style="left:131px;top:32px;width:188px;height:251px;background:#fff;border:1px solid #8f8f8f;box-shadow:3px 3px 2px rgba(0,0,0,0.42),inset 1px 1px 0 #f1f1f1,inset -1px -1px 0 #f1f1f1"></div>
<div class="a" style="left:133px;top:169px;width:180px;height:22px;background:#fadb80"></div>
<div class="a" style="left:133px;top:191px;width:180px;height:1px;background:#d3d8de"></div>
<div class="a" style="left:134px;top:57px;width:183px;height:1px;background:#a9b5c4"></div>
<div class="a" style="left:134px;top:146px;width:183px;height:1px;background:#a9b5c4"></div>
<div class="a" style="left:134px;top:258px;width:183px;height:1px;background:#a9b5c4"></div>
<div class="t" style="left:159px;top:40px">L<span style="text-decoration:underline">i</span>cense management</div>
<div class="t" style="left:159px;top:63px"><span style="text-decoration:underline">S</span>etup Global Config</div>
<div class="t" style="left:159px;top:85px">S<span style="text-decoration:underline">e</span>tup Group Def</div>
<div class="t" style="left:159px;top:107px">Se<span style="text-decoration:underline">t</span>up Task Group</div>
<div class="t" style="left:159px;top:129px"><span style="text-decoration:underline">A</span>pp Log Level</div>
<div class="t" style="left:159px;top:152px">Setup <span style="text-decoration:underline">M</span>etric</div>
<div class="t" style="left:159px;top:174px">Metr<span style="text-decoration:underline">i</span>c filters</div>
<div class="t" style="left:159px;top:197px">Set<span style="text-decoration:underline">u</span>p Uploader</div>
<div class="t" style="left:159px;top:219px">Setup Up<span style="text-decoration:underline">l</span>oader Cfg</div>
<div class="t" style="left:159px;top:241px">S<span style="text-decoration:underline">p</span>lunk Setup</div>
<div class="t" style="left:159px;top:264px"><span style="text-decoration:underline">C</span>heck Errors</div>
<div class="a" style="left:303px;top:154px"><svg width="6" height="10"><path d="M0 0L5.6 5L0 10Z" fill="#000"/></svg></div>
<div class="a" style="left:303px;top:176px"><svg width="6" height="10"><path d="M0 0L5.6 5L0 10Z" fill="#000"/></svg></div>
<div class="a" style="left:303px;top:243px"><svg width="6" height="10"><path d="M0 0L5.6 5L0 10Z" fill="#000"/></svg></div>
<div class="a" style="left:313px;top:166px;width:186px;height:335px;background:#fff;border:1px solid #8f8f8f;box-shadow:3px 3px 2px rgba(0,0,0,0.42),inset 1px 1px 0 #f1f1f1,inset -1px -1px 0 #f1f1f1"></div>
<div class="a" style="left:315px;top:213px;width:182px;height:22px;background:#fadb80"></div>
<div class="t" style="left:341px;top:174px"><span style="text-decoration:underline">E</span>CATT Configuration</div>
<div class="t" style="left:341px;top:196px"><span style="text-decoration:underline">I</span>DOC Segment filter</div>
<div class="t" style="left:341px;top:218px"><span style="text-decoration:underline">C</span>hange doc. filter</div>
<div class="t" style="left:341px;top:240px"><span style="text-decoration:underline">T</span>able reader filter</div>
<div class="t" style="left:341px;top:262px"><span style="text-decoration:underline">N</span>RIV filter</div>
<div class="t" style="left:341px;top:284px">SQ<span style="text-decoration:underline">V</span>I report filter</div>
<div class="t" style="left:341px;top:306px"><span style="text-decoration:underline">L</span>ogs file filter</div>
<div class="t" style="left:341px;top:328px">SM<span style="text-decoration:underline">3</span>7 job filter</div>
<div class="t" style="left:341px;top:350px">S<span style="text-decoration:underline">O</span>ST filter</div>
<div class="t" style="left:341px;top:372px"><span style="text-decoration:underline">A</span>L11 filter</div>
<div class="t" style="left:341px;top:394px"><span style="text-decoration:underline">S</span>LG1 filter</div>
<div class="t" style="left:341px;top:416px">S<span style="text-decoration:underline">R</span>T_MONI filter</div>
<div class="t" style="left:341px;top:438px">STA<span style="text-decoration:underline">D</span> metrics</div>
<div class="t" style="left:341px;top:460px">S<span style="text-decoration:underline">Q</span>L Scripts metrics</div>
<div class="t" style="left:341px;top:482px"><span style="text-decoration:underline">M</span>ore</div>
<div class="a" style="left:483px;top:440px"><svg width="6" height="10"><path d="M0 0L5.6 5L0 10Z" fill="#000"/></svg></div>
<div class="a" style="left:483px;top:462px"><svg width="6" height="10"><path d="M0 0L5.6 5L0 10Z" fill="#000"/></svg></div>
<div class="a" style="left:483px;top:484px"><svg width="6" height="10"><path d="M0 0L5.6 5L0 10Z" fill="#000"/></svg></div></body></html>
